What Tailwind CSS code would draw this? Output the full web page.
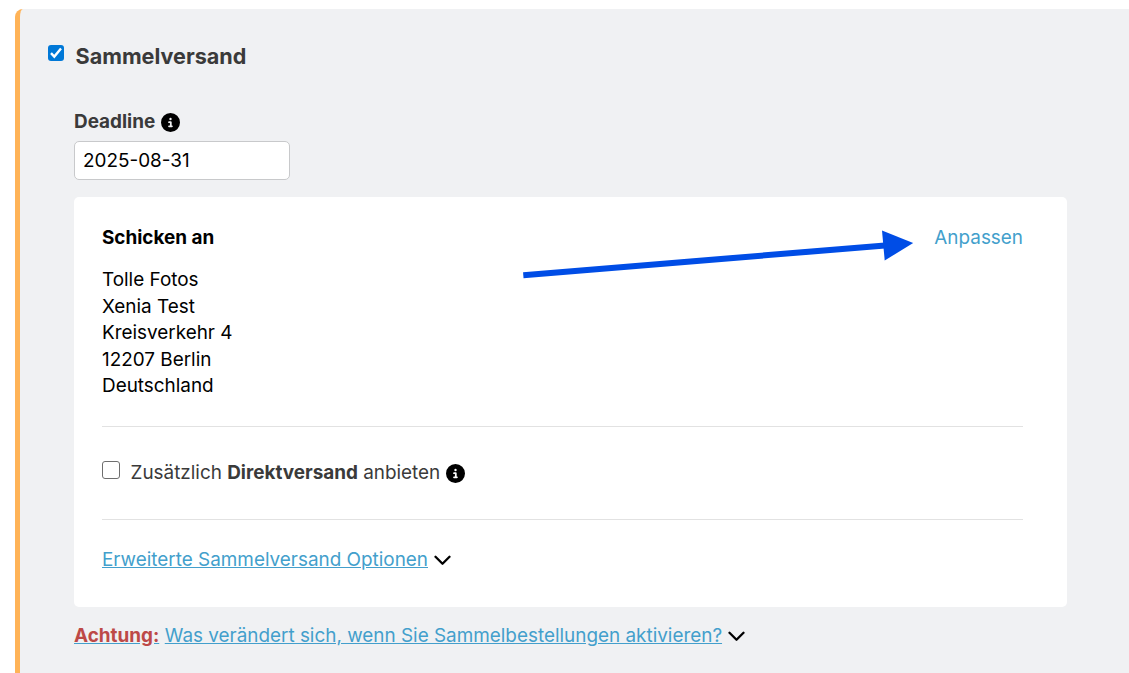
<!DOCTYPE html>
<html lang="de">
<head>
    <meta charset="UTF-8">
    <meta name="viewport" content="width=device-width, initial-scale=1.0">
    <title>Sammelversand</title>
    <script src="https://cdn.jsdelivr.net/npm/@tailwindcss/browser@4"></script>
</head>
<body class="bg-white font-['Inter',sans-serif] text-[18.9px] leading-[26.5px] text-[#3a3a3a] overflow-hidden">
    <div class="ml-[15px] mt-[9px] h-[664px] border-l-5 border-[#ffb357] rounded-tl-lg bg-[#f0f1f3] pl-[54px] pr-[62px]">
        <!-- Heading -->
        <label class="flex items-center pt-8 -ml-[26px]">
            <span class="flex items-center justify-center size-4 mb-1.5 rounded-[3px] bg-[#0078d7]">
                <svg class="size-4" viewBox="0 0 16 16" fill="none" stroke="#fff" stroke-width="2.4">
                    <path d="M3 8.200 6.300 11.600 13 3.600"/>
                </svg>
            </span>
            <span class="ml-[11.5px] text-[21.6px] leading-[30px] font-bold">Sammelversand</span>
        </label>

        <!-- Deadline -->
        <div class="flex items-center mt-[38px]">
            <span class="font-bold">Deadline</span>
            <svg class="ml-1.5 mt-px size-[19px]" viewBox="0 0 512 512">
                <path fill="#000" d="M256 512A256 256 0 1 0 256 0a256 256 0 1 0 0 512zM216 336h24V272H216c-13.300 0-24-10.700-24-24s10.700-24 24-24h48c13.300 0 24 10.700 24 24v88h8c13.300 0 24 10.700 24 24s-10.700 24-24 24H216c-13.300 0-24-10.700-24-24s10.700-24 24-24zm40-208a32 32 0 1 1 0 64 32 32 0 1 1 0-64z"/>
            </svg>
        </div>
        <input type="text" value="2025-08-31" class="block mt-[5px] w-[216px] h-[39px] px-2 rounded-[5px] border border-[#c8c9cb] bg-white text-black">

        <!-- Shipping card -->
        <div class="relative mt-[17px] h-[410px] rounded-[5px] bg-white pl-7 pr-11 pt-7">
            <div class="flex justify-between">
                <span class="font-bold text-black">Schicken an</span>
                <a class="text-[#439fcc]">Anpassen</a>
            </div>
            <p class="mt-4 text-black">
                Tolle Fotos<br>
                Xenia Test<br>
                Kreisverkehr 4<br>
                12207 Berlin<br>
                Deutschland
            </p>
            <div class="flex items-center mt-[26px] h-[94px] border-y border-[#e2e2e2]">
                <span class="size-[18px] mb-[6px] rounded-[3px] border border-[#6e6e6e] bg-white"></span>
                <span class="ml-[10.5px] mt-0.5">Zusätzlich <b>Direktversand</b> anbieten</span>
                <svg class="ml-1.5 mt-0.5 size-[19px]" viewBox="0 0 512 512">
                    <path fill="#000" d="M256 512A256 256 0 1 0 256 0a256 256 0 1 0 0 512zM216 336h24V272H216c-13.300 0-24-10.700-24-24s10.700-24 24-24h48c13.300 0 24 10.700 24 24v88h8c13.300 0 24 10.700 24 24s-10.700 24-24 24H216c-13.300 0-24-10.700-24-24s10.700-24 24-24zm40-208a32 32 0 1 1 0 64 32 32 0 1 1 0-64z"/>
                </svg>
            </div>
            <div class="flex items-center mt-[27px]">
                <a class="text-[#439fcc] underline">Erweiterte Sammelversand Optionen</a>
                <svg class="ml-1.5 mt-px w-[17px] h-[11px]" viewBox="0 0 17 11" fill="none" stroke="#000" stroke-width="2.3" stroke-linecap="round" stroke-linejoin="round">
                    <path d="M1.500 1.700 8.500 8.800 15.500 1.700"/>
                </svg>
            </div>

            <!-- Pointer arrow -->
            <svg class="absolute left-[446px] top-[30px] w-[396px] h-[60px]" viewBox="520 227 396 60">
                <path d="M523.300 275.200 885 245.500" stroke="#004de6" stroke-width="6" fill="none"/>
                <path d="M882 230.500 913.200 243 884.700 260.500z" fill="#004de6"/>
            </svg>
        </div>

        <div class="flex items-center mt-4">
            <a class="text-[#439fcc] underline"><b class="text-[#bd4947]">Achtung:</b></a>
            <a class="ml-[5.5px] text-[#439fcc] underline">Was verändert sich, wenn Sie Sammelbestellungen aktivieren?</a>
            <svg class="ml-1.5 mt-px w-[17px] h-[11px]" viewBox="0 0 17 11" fill="none" stroke="#000" stroke-width="2.3" stroke-linecap="round" stroke-linejoin="round">
                <path d="M1.500 1.700 8.500 8.800 15.500 1.700"/>
            </svg>
        </div>
    </div>
</body>
</html>
